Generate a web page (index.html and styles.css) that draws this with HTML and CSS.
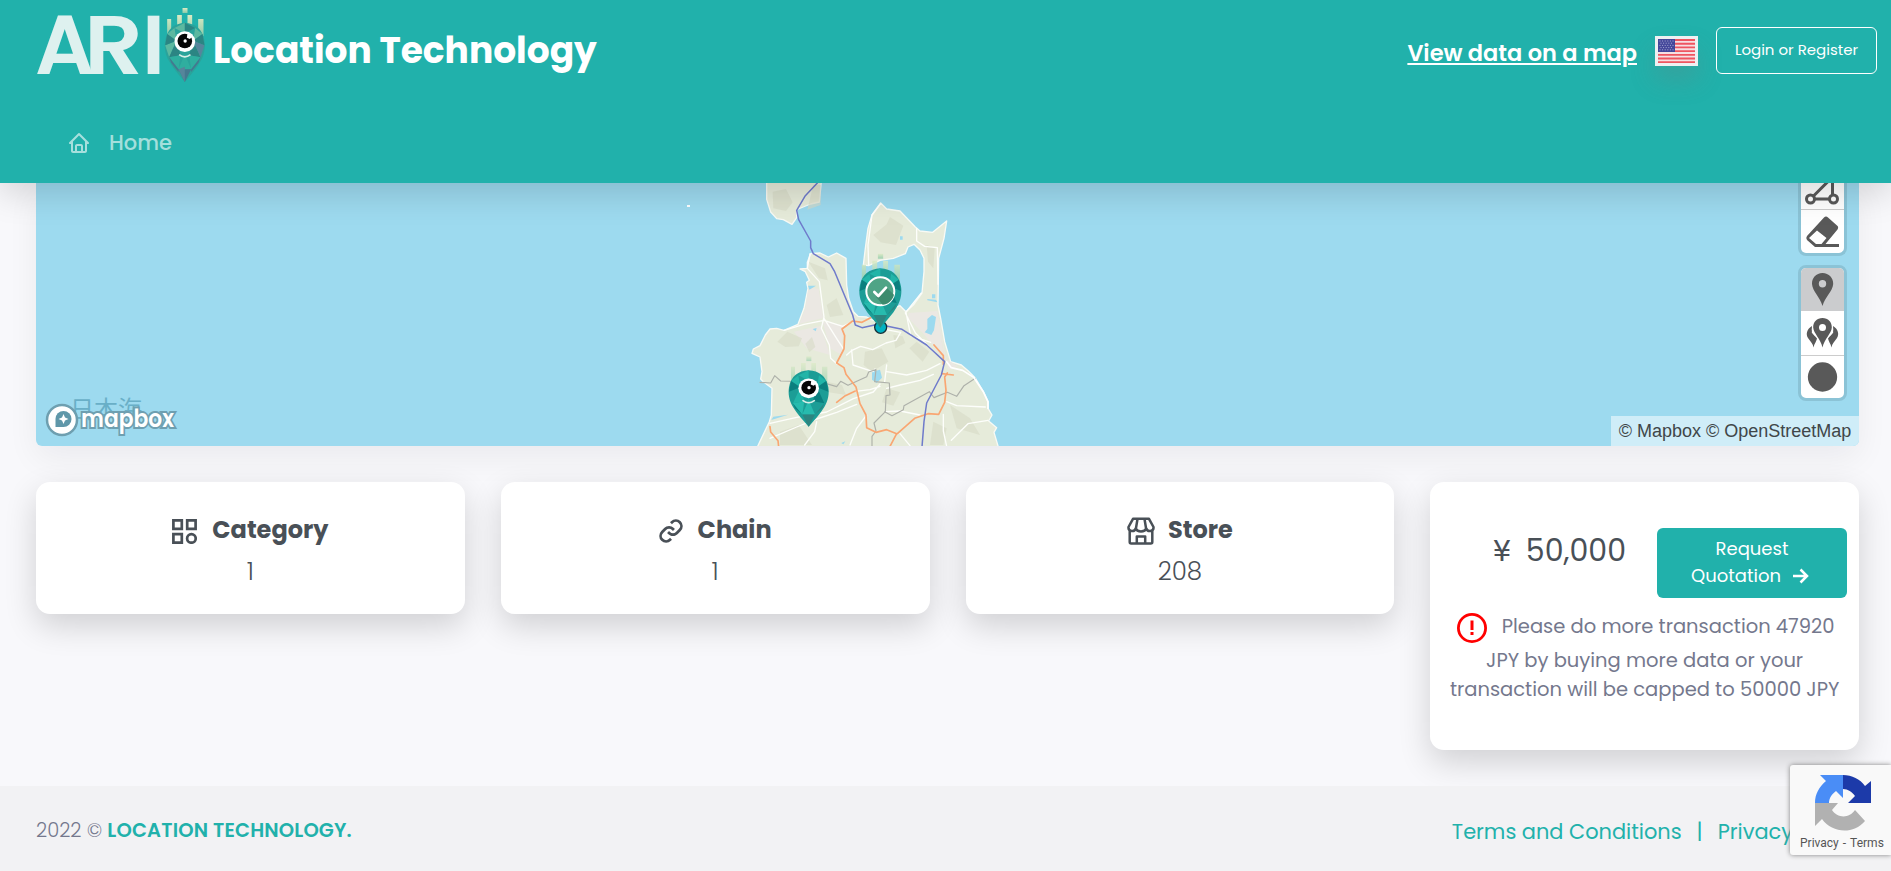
FILE: index.html
```html
<!DOCTYPE html>
<html lang="en">
<head>
<meta charset="utf-8">
<title>Location Technology</title>
<link rel="stylesheet" href="styles.css">
</head>
<body>
<svg class="defs" width="0" height="0" aria-hidden="true">
  <defs>
    <linearGradient id="spike" x1="0" y1="0" x2="0" y2="1"><stop offset="0" stop-color="#dcebc4"/><stop offset="1" stop-color="#8ccaa9"/></linearGradient>
    <g id="spikes" fill="url(#spike)">
      <path d="M8 33h12v38l-12 14zM38 21h14v38H38zM69 21h14v38H69zM101 33h16v52l-16-14z"/>
      <path d="M54 0h15v15H54z"/>
    </g>
    <g id="gem">
      <path fill="#2aa39b" d="M61 44C30 46 8 62 2 98c-3 20 0 42 12 62 12 22 30 42 47 62 17-20 35-40 47-62 12-20 15-42 12-62C114 62 92 46 61 44z"/>
      <path fill="#5cb8a0" d="M61 44 30 60 61 76zM30 60 8 78l28 20zM114 78 92 60 86 98zM2 112l34-14-22 50z"/>
      <path fill="#2b8583" d="M61 44l31 16-31 16zM8 78l28 20-34 14zM114 78l-28 20 34 14zM36 98l-22 50 34-6zM86 98l22 50-34-6z"/>
      <path fill="#2fae9f" d="M48 142l-34 6 28 36zM74 142l34 6-28 36zM61 138l-19 46h38z"/>
      <path fill="#45788f" d="M14 148l6 16 22 28V184zM108 148l-6 16-22 28V184zM42 184h38l-19 38z"/>
      <path fill="#56859b" d="M42 184l19 38V176zM120 112l-34-14 22 50z"/>
    </g>
    <g id="map-gem">
      <path fill="#1c9d96" d="M61 44C30 46 8 62 2 98c-3 20 0 42 12 62 12 22 30 42 47 62 17-20 35-40 47-62 12-20 15-42 12-62C114 62 92 46 61 44z"/>
      <path fill="#22b5a8" d="M61 44 30 60 61 76zM30 60 8 78l28 20zM114 78 92 60 86 98zM36 98l-22 50 34-6z"/>
      <path fill="#0b7f7e" d="M8 78l28 20-34 14zM114 78l-28 20 34 14zM86 98l22 50-34-6zM14 148l6 16 22 20z"/>
      <path fill="#27bbae" d="M48 142l-34 6 28 36zM61 138l-19 46h38z"/>
      <path fill="#2d8580" d="M42 184h38l-19 38zM108 148l-6 16-22 20z"/>
    </g>
    <g id="eye">
      <path d="M44 140q17 13 34 0" fill="none" stroke="#d8efe8" stroke-width="5"/>
      <circle cx="61" cy="101" r="31" fill="#fff"/>
      <circle cx="61" cy="99" r="22" fill="#050505"/>
      <path fill="#fff" d="M69 76l16 9-9 8-9-4z"/>
      <circle cx="62" cy="99" r="5" fill="#fff"/>
    </g>
  </defs>
</svg>

<header class="header">
  <div class="topbar">
    <a class="brand">
      <svg class="logo" viewBox="36 0 174 90" width="174" height="90">
        <text class="wordmark" y="74"><tspan x="35">A</tspan><tspan x="84" textLength="59" lengthAdjust="spacingAndGlyphs">R</tspan><tspan x="142">I</tspan></text>
        <g transform="translate(164.500 8) scale(.3333)"><use href="#spikes"/><use href="#gem"/><use href="#eye"/></g>
      </svg>
      <span class="title">Location Technology</span>
    </a>
    <div class="actions">
      <a class="maplink">View data on a map</a>
      <svg class="flag" viewBox="0 0 43 30" width="43" height="30">
        <path fill="#eef0f2" d="M0 0h43v30H0z"/>
        <path fill="#f6dfe1" d="M3 3h37v24H3z"/>
        <path stroke="#ee5560" stroke-width="1.850" d="M3 4h37M3 7.700h37M3 11.400h37M3 15.100h37M3 18.800h37M3 22.500h37M3 26.100h37"/>
        <path fill="#44479a" d="M3 3h17v13H3z"/>
        <path stroke="#a9abd4" stroke-dasharray="1 1.600" d="M4.500 5h14M5.500 7.200h13M4.500 9.400h14M5.500 11.600h13M4.500 13.800h14"/>
      </svg>
      <button class="login">Login or Register</button>
    </div>
  </div>
  <nav class="nav">
    <svg viewBox="0 0 24 24" width="24" height="24" fill="currentColor"><path d="M3 13h1v7c0 1.103.897 2 2 2h12c1.103 0 2-.897 2-2v-7h1a1 1 0 0 0 .707-1.707l-9-9a.999.999 0 0 0-1.414 0l-9 9A1 1 0 0 0 3 13zm7 7v-5h4v5h-4zm2-15.586 6 6V15l.001 5H16v-5c0-1.103-.897-2-2-2h-4c-1.103 0-2 .897-2 2v5H6v-9.586l6-6z"/></svg>
    <span>Home</span>
  </nav>
</header>

<main class="content">
  <section class="map">
    <svg class="canvas" viewBox="36 183 1823 263" width="1823" height="263">
      <path fill="#9ddaef" d="M36 183h1823v263H36z"/>
      <path fill="#fff" d="M687 205h3v2h-3z"/>
      <g transform="translate(720 175) scale(.33333)" stroke-linejoin="round" stroke-linecap="round">
        <g fill="#e6ebda" stroke="#f8faf5" stroke-width="4">
          <path d="M140 18v55l12 38 18 20 20 3 26 14 14-20v-24l12-5 30-12 26-6 6-62z"/>
          <path d="M482 84 500 102 540 108 586 156 600 168 638 172 680 138 672 190 656 250 654 390 662 430 674 500 692 560 724 570 745 588 765 608 790 650 804 680 804 700 816 720 806 738 830 758 822 772 835 816H112L148 740 154 720 156 640 130 620 122 612 126 590 120 546 96 535 100 522 120 512 136 480 150 462 170 460 192 466 234 448 252 400 264 340 260 322 268 316 256 290 240 282 262 280 262 262 272 236 300 234 325 246 350 234 378 250 380 330 386 370 400 410 414 424 440 426 460 436 520 400 540 392 558 410 580 390 606 354 612 290 612 250 600 225 582 208 564 216 556 236 520 250 480 256 446 272 430 270 436 220 444 160 456 120z"/>
        </g>
        <path fill="#ebe8e3" d="M265 338l31 3 14 88-72 17 18-46zM566 414l86-6 20 140-20-20-40-50-48-50zM652 400l8 60 14 90 40 24-30 10-14-80zM308 440l62 10-5 90-35-20zM222 470l80-18 28 88-70-20z"/>
        <path fill="#d7dbc7" opacity=".6" d="M460 180l40-32 10-22 40 26-22 58-46-8zM158 50l40-8 20 40-20 26-38-8zM280 30h22v60l-40 14zM265 260l50 20 8 36-26-6zM172 500l30-30 44 20-10 24-40 2zM256 506l20-20 10 30-18 16zM590 500l38 30-20 30-40-40zM435 530l50-10 20 40-50 30-24-20zM520 480l28 4 8 20-30 16zM690 690l60 40 30 50-70-20zM320 620l46 10 12 30-60-10zM180 770l56-20 40 60h-96zM500 640l40 12-20 40-34-10zM620 210l24 10-4 60-16-20zM320 390l30-20 20 50-40 6zM640 740l40 20-10 50h-40z"/>
        <path fill="#9ddaef" d="M264 332l24 0-20 12zM622 432l14-12 12 6-6 40-8 14-20-8 8-10zM456 590l24-6 6 24-16 16-14-10zM622 372l26 2 4 8-30-6zM160 725l44-6-50 16zM278 462l12-3-3 10zM364 804l12-5-6 9zM540 184h8v10h-8zM636 358h10v12h-10z"/>
        <g fill="none" stroke="#fdfefb" stroke-width="4">
          <path d="M192 466l60-18 60-12 56 18 30-14M270 236l-8 44 36 40 14 106-8 34 24 50 4 40 20 18M312 430l40 64 20 30M380 540l16-14 26-12 36 10 40-20 30-8 14-24-44-8M395 525l4 45 60 20 6-8M446 270l-2-60 12-90 26-34M590 160v38l24 16 38 4 2 110M604 354l-48 60 30 60 60 60M558 412l14 70 60 20"/>
          <path d="M150 745l80-18 90-16 80-40 60-20 20-24M150 790l80-34 60-24 60-20 60-24M290 740l-6 30-30 40M400 650l50-6 30-10M500 590l60 10 60-14 40-20M440 720l-30 40-20 50M500 570l-6 50M500 640l40-10 60-14 40-18M680 680l30 12 86 4M804 736l-60 10-50 50M670 718v50l10 46M540 776l30 36M600 720l-60-12-44 2"/>
        </g>
        <path fill="none" stroke="#aeb1aa" stroke-width="3.500" d="M120 622l32 2 12-22 18 16 120 3 48 14 12-16 22 12 56-26 6-14 22-7-4 36 44 4 2 36-12 2-2 48-34 34 6 24-12 16v35M494 710l22 12 34-18 2-12 76-42 14 18 40-16 28 12 22-32 34-22"/>
        <path fill="none" stroke="#f9a672" stroke-width="5" d="M452 428l-26 14-28-4-32 24 8 20-2 40-22 42 22 14 6 20 30 38 12 50 18 34 2 38 28 14 32-8 30 12-20 38M532 776l52-46 40-14 32 2 18-36 4-36-4-40 8-12M666 596l34 4M406 648l-30 14-26 20M150 755l2 16 22 26 2 18M642 510l28 32v26"/>
        <path fill="none" stroke="#6f7bcb" stroke-width="4.500" d="M292 24 256 62 230 106 236 134 272 198 272 218 280 236 330 266 344 290 398 420 406 450 426 458 474 448 546 463 620 510 674 560 664 600 620 684 612 740 606 816"/>
        <path fill="none" stroke="#fff" stroke-width="5" d="M680 560l14 18 34 8 34 22 28 42 14 30v20"/>
        <circle cx="482" cy="457" r="18" fill="#00b2c2" stroke="#16323a" stroke-width="4"/>
        <g transform="translate(417 236) scale(1.050 1)"><g opacity=".8"><use href="#spikes"/></g><use href="#map-gem"/></g>
        <circle cx="481" cy="349" r="42" fill="#4fa486" stroke="#fff" stroke-width="6"/>
        <path fill="#3d8b6e" d="M500 338l22 21c-4 18-20 30-34 30l-20-24z"/>
        <path fill="none" stroke="#fff" stroke-width="8" d="M463 351l12 12 23-25"/>
        <g transform="translate(205 544) scale(1 .95)"><g opacity=".6"><use href="#spikes"/></g><use href="#map-gem"/><use href="#eye"/></g>
      </g>
      <text class="sea" x="70" y="418">日本海</text>
      <circle cx="62" cy="420" r="15" fill="#fff" stroke="#6e9fb0" stroke-width="2.500"/>
      <path fill="#5f97a9" d="M55.500 427v-8a8 8 0 1 1 8 8z"/>
      <path fill="#fff" d="M63.500 414l1.500 3.500 3.500 1.500-3.500 1.500-1.500 3.500-1.500-3.500-3.500-1.500 3.500-1.500z"/>
      <text class="mapbox" x="81" y="427" textLength="93" lengthAdjust="spacingAndGlyphs">mapbox</text>
    </svg>
    <div class="tools">
      <div class="toolgroup clipped">
        <svg viewBox="0 17 43 26"><g fill="none" stroke="#595959" stroke-width="3"><path d="M12.500 30 31.500 11v18M14 33h14"/><circle cx="9.500" cy="33" r="4"/><circle cx="32.500" cy="33" r="4"/></g></svg>
        <svg viewBox="0 0 43 43"><path fill="#595959" d="M23 7.500q2-2 4 0l9 8q2 1.500.5 4L24.500 34H38v3H14L6 30q-1.500-2 0-4zM16 20.500l-8 7.500 7 6h5.500l5-6z"/></svg>
      </div>
      <div class="toolgroup">
        <svg class="on" viewBox="0 0 43 43"><path fill="#595959" fill-rule="evenodd" d="M21.500 5C15 5 10.800 10 11 16c.4 7 8 13 10.500 22C24 29 31.800 23 32.200 16 32.400 10 28 5 21.500 5zm0 7a3.700 3.700 0 1 1 0 7.400 3.700 3.700 0 0 1 0-7.400z"/></svg>
        <svg viewBox="0 0 43 44"><path fill="#595959" fill-rule="evenodd" d="M21.500 7c-5.500 0-9.500 4-9.300 9.500.4 6 7.300 11 9.300 20 2-9 9-14 9.300-20C31 11 27 7 21.500 7zm0 6a3.500 3.500 0 1 1 0 7 3.500 3.500 0 0 1 0-7z"/><path fill="#595959" d="M11 15c-5 3-6.500 8-4 12 3 4 5 6 5.500 9.500.8-4 3-6 3.500-9-2-2.500-4-4-4.500-5-1.500-1 0-2-.8-3.500zM32 15c5 3 6.500 8 4 12-3 4-5 6-5.500 9.500-.8-4-3-6-3.500-9 2-2.500 4-4 4.500-5 1.500-1 0-2 .8-3.500z"/></svg>
        <svg viewBox="0 0 43 43"><circle cx="21.500" cy="21.500" r="15" fill="#595959"/></svg>
      </div>
    </div>
    <div class="attribution">© Mapbox © OpenStreetMap</div>
  </section>

  <section class="cards">
    <article class="card">
      <h4 class="card-title"><svg viewBox="0 0 25 25" width="25" height="25" fill="none" stroke="currentColor" stroke-width="2.700"><path d="M1.400 1.400h8.400v8.400H1.400zM15.200 1.400h8.400v8.400h-8.400zM1.400 15.200h8.400v8.400H1.400z"/><circle cx="19.400" cy="19.400" r="4.300"/></svg><span>Category</span></h4>
      <p class="value">1</p>
    </article>
    <article class="card">
      <h4 class="card-title"><svg viewBox="3.300 3.300 17.400 17.400" width="24" height="24" fill="currentColor"><path d="M8.465 11.293c1.133-1.133 3.109-1.133 4.242 0l.707.707 1.414-1.414-.707-.707c-.943-.944-2.199-1.465-3.535-1.465s-2.592.521-3.535 1.465L4.929 12a5.008 5.008 0 0 0 0 7.071 4.983 4.983 0 0 0 3.535 1.462A4.982 4.982 0 0 0 12 19.071l.707-.707-1.414-1.414-.707.707a3.007 3.007 0 0 1-4.243 0 3.005 3.005 0 0 1 0-4.243l2.122-2.121z"/><path d="m12 4.929-.707.707 1.414 1.414.707-.707a3.007 3.007 0 0 1 4.243 0 3.005 3.005 0 0 1 0 4.243l-2.122 2.121c-1.133 1.133-3.109 1.133-4.242 0L10.586 12l-1.414 1.414.707.707c.943.944 2.199 1.465 3.535 1.465s2.592-.521 3.535-1.465L19.071 12a5.008 5.008 0 0 0 0-7.071 5.006 5.006 0 0 0-7.071 0z"/></svg><span>Chain</span></h4>
      <p class="value">1</p>
    </article>
    <article class="card">
      <h4 class="card-title store"><svg viewBox="0 0 28 28" width="28" height="28" fill="none" stroke="currentColor" stroke-width="2.500" stroke-linejoin="round"><path d="M6 1.800h16L26.500 10a3.700 3.700 0 0 1-7.200 1.500 5.500 4 0 0 1-10.600 0A3.700 3.700 0 0 1 1.500 10zM10.500 2l-1.500 9M17.500 2l1.500 9M2.700 13v12q0 1.500 1.500 1.500h19.600q1.500 0 1.500-1.500V13M9.800 26v-6.500h8.400V26"/></svg><span>Store</span></h4>
      <p class="value">208</p>
    </article>
    <article class="card quote">
      <div class="price-row">
        <div class="price"><span>¥</span><span>50,000</span></div>
        <button class="request"><span>Request</span><span class="l2">Quotation<svg viewBox="0 0 16 16" width="16" height="16" fill="none" stroke="currentColor" stroke-width="2.500"><path d="M0 8h14M7.500 1.500 14 8l-6.500 6.500"/></svg></span></button>
      </div>
      <div class="notice">
        <p class="n1"><svg viewBox="0 0 30 30" width="30" height="30"><circle cx="15" cy="15" r="13.600" fill="none" stroke="#f00" stroke-width="2.800"/><path fill="#f00" d="M13.500 7.500h3v9.500h-3zM13.500 19h3v3h-3z"/></svg><span>Please do more transaction 47920</span></p>
        <p class="n2">JPY by buying more data or your</p>
        <p class="n3">transaction will be capped to 50000 JPY</p>
      </div>
    </article>
  </section>
</main>

<footer class="footer">
  <div><span class="year">2022 ©</span><b class="company">LOCATION TECHNOLOGY.</b></div>
  <div class="legal"><a>Terms and Conditions</a><span>|</span><a>Privacy</a></div>
</footer>

<aside class="recaptcha">
  <svg viewBox="0 0 56 56" width="56" height="56">
    <path fill="#1c3aa9" d="M28 0c9 0 17 4 22 11l6-5v22H33l7-7c-3-4-7-7-12-7z"/>
    <path fill="#4a8df6" d="M5 0h23v23l-7-7c-4 3-7 7-7 12H0C0 19 4 12 11 6z"/>
    <path fill="#b1b1b1" d="M0 28h23l-6 7c5 8 17 9 23 0l10 11C38 60 17 58 7 44l-7 7z"/>
  </svg>
  <div class="rc-text"><span>Privacy</span><span>-</span><span>Terms</span></div>
</aside>
</body>
</html>
```

FILE: styles.css
```css
* { box-sizing: border-box; }
body { margin: 0; height: 871px; overflow: hidden; display: flex; flex-direction: column; background: #f8f8fb; color: #495057; font-family: Poppins, Inter, "Open Sans", sans-serif; }
p, h4 { margin: 0; }
button { font-family: inherit; margin: 0; padding: 0; }
span, a { white-space: nowrap; }
.defs { display: block; flex: none; height: 0; }

.header { position: relative; z-index: 2; flex: none; height: 183px; background: #21b1ab; color: #fff; box-shadow: 0 10px 32px rgba(0, 0, 0, .15); }
.topbar { height: 100px; display: flex; justify-content: space-between; padding: 0 14px 0 36px; }
.brand { display: flex; align-items: flex-start; }
.logo { display: block; overflow: visible; }
.wordmark { font: 600 83px Poppins, Inter, sans-serif; fill: #def1ef; }
.title { margin-left: 3px; font-size: 36px; font-weight: 700; line-height: 101px; }
.actions { display: flex; align-items: center; }
.maplink { margin: 6px 18px 0 0; font-size: 22.500px; font-weight: 600; line-height: 30px; text-decoration: underline; text-decoration-thickness: 2px; text-underline-offset: 2px; }
.flag { margin-right: 18px; margin-top: 2px; box-shadow: 0 14px 24px rgba(120, 120, 120, .25); }
.login { width: 161px; height: 47px; padding-bottom: 2px; border: 1px solid #fff; border-radius: 6px; background: none; color: #fff; font-size: 15px; }
.nav { display: flex; align-items: center; gap: 18px; padding: 0 67px; height: 85px; color: rgba(255, 255, 255, .6); font-size: 21px; font-weight: 500; }

.content { flex: none; height: 603px; padding: 0 32px 0 36px; }
.map { position: relative; height: 263px; border-radius: 0 0 6px 6px; box-shadow: 0 12px 32px rgba(18, 22, 33, .06); }
.canvas { display: block; border-radius: 0 0 6px 6px; }
.sea { font: 400 24px "Noto Sans CJK JP", sans-serif; fill: #69afc7; }
.mapbox { font: 600 25px Poppins, Inter, sans-serif; fill: #fff; stroke: #6e9fb0; stroke-width: 4px; paint-order: stroke; }
.tools { position: absolute; top: 0; right: 12px; display: flex; flex-direction: column; gap: 9px; }
.toolgroup { border: 3px solid #8bc3d6; border-radius: 8px; overflow: hidden; background: #fff; }
.toolgroup svg { display: block; width: 43px; height: 43px; }
.toolgroup svg + svg { border-top: 1px solid #ccc; }
.toolgroup .on { background: #cbccce; }
.toolgroup .on + svg { height: 44px; border-top: 0; }
.clipped { border-top: 0; border-radius: 0 0 8px 8px; }
.clipped svg:first-child { height: 26px; }
.clipped svg + svg { height: 44px; }
.attribution { position: absolute; right: 0; bottom: 0; width: 248px; height: 30px; border-radius: 0 0 6px 0; background: #cfedf8; color: #404649; font: 18px/30px "Liberation Sans", sans-serif; text-align: center; white-space: nowrap; }

.cards { display: grid; grid-template-columns: repeat(4, 1fr); gap: 36px; margin-top: 36px; align-items: start; }
.card { height: 132px; padding-top: 31px; border-radius: 14px; background: #fff; box-shadow: 0 12px 32px rgba(0, 0, 0, .16); }
.card-title { display: flex; justify-content: center; align-items: center; gap: 15px; height: 36px; font-size: 24px; font-weight: 700; line-height: 36px; }
.card-title span { margin-top: -3px; }
.store { gap: 13px; }
.value { margin-top: 5px; text-align: center; font-size: 24.500px; font-weight: 300; line-height: 36px; }
.quote { height: 268px; padding: 46px 12px 0; }
.price-row { display: flex; justify-content: flex-end; }
.price { display: flex; gap: 15px; margin-right: 31px; font-size: 30px; font-weight: 400; line-height: 45px; }
.request { display: flex; flex-direction: column; align-items: center; width: 190px; height: 70px; padding-top: 7px; border: 0; border-radius: 6px; background: #21b1ab; color: #fff; font-size: 18px; font-weight: 400; line-height: 27px; }
.l2 { display: flex; align-items: center; gap: 12px; margin-right: 4px; }
.notice { color: #74788d; font-size: 19.500px; font-weight: 400; text-align: center; white-space: nowrap; }
.n1 { display: flex; justify-content: center; align-items: center; gap: 15px; height: 30px; margin: 15px 0 0 2px; }
.n1 span { margin-top: -4px; }
.n2 { margin-top: 3px; line-height: 29px; }
.n3 { line-height: 29px; }

.footer { flex: none; height: 85px; display: flex; justify-content: space-between; align-items: center; padding: 4px 98px 0 36px; background: #f2f2f4; color: #74788d; font-size: 19.500px; font-weight: 300; }
.year { margin-right: 5px; }
.company, .legal { color: #21b1ab; }
.company { font-size: 19.500px; font-weight: 600; letter-spacing: .17px; }
.legal { display: flex; gap: 15px; padding-top: 2px; font-size: 20.900px; font-weight: 400; }
.recaptcha { position: absolute; z-index: 3; right: 0; top: 765px; width: 101px; height: 90px; padding: 10px 0 0 10px; border-radius: 3px 0 0 3px; background: #f9f9f9; box-shadow: 0 0 5px #808080; }
.recaptcha svg { display: block; margin-left: 15px; }
.rc-text { display: flex; gap: 4px; margin-top: 5px; color: #555; font: 12px/14px Roboto, sans-serif; }
```
